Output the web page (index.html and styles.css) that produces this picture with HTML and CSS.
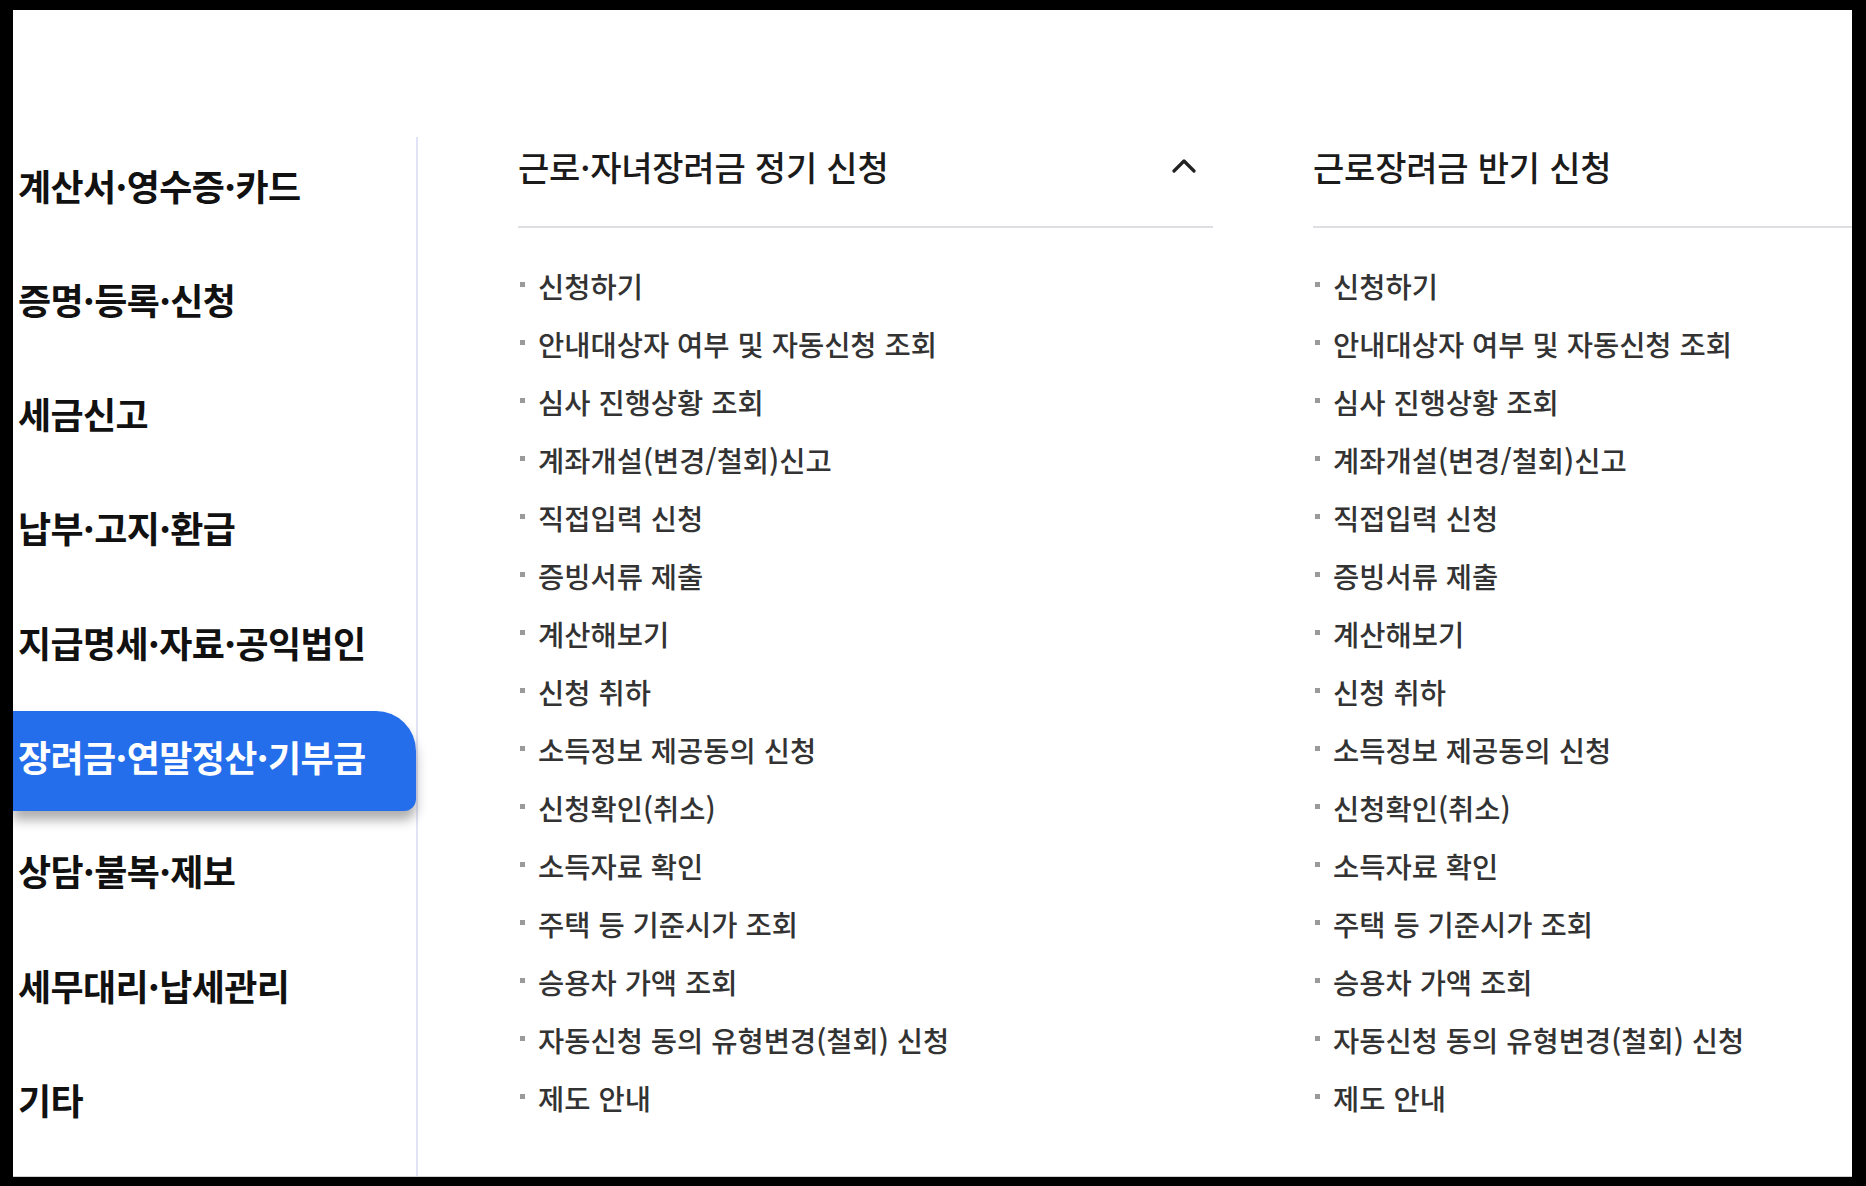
FILE: index.html
```html
<!DOCTYPE html>
<html lang="ko">
<head>
<meta charset="UTF-8" />
<meta name="viewport" content="width=device-width, initial-scale=1" />
<title>장려금·연말정산·기부금</title>
<link rel="stylesheet" href="styles.css">
</head>
<body>

<div class="frame">
  <nav class="side">
    <ul class="side-menu">
      <li class="side-item">계산서·영수증·카드</li>
      <li class="side-item">증명·등록·신청</li>
      <li class="side-item">세금신고</li>
      <li class="side-item">납부·고지·환급</li>
      <li class="side-item">지급명세·자료·공익법인</li>
      <li class="side-item is-active">장려금·연말정산·기부금</li>
      <li class="side-item">상담·불복·제보</li>
      <li class="side-item">세무대리·납세관리</li>
      <li class="side-item">기타</li>
    </ul>
  </nav>

  <main class="content">
    <section class="group">
      <div class="group-head">
        <h3 class="group-title">근로·자녀장려금 정기 신청</h3>
        <svg class="chev" width="26" height="16" viewBox="0 0 26 16">
          <polyline points="3,14 13,4 23,14" fill="none" stroke="#222" stroke-width="3.2" stroke-linecap="round" stroke-linejoin="round"/>
        </svg>
      </div>
      <ul class="links">
        <li>신청하기</li>
        <li>안내대상자 여부 및 자동신청 조회</li>
        <li>심사 진행상황 조회</li>
        <li>계좌개설(변경/철회)신고</li>
        <li>직접입력 신청</li>
        <li>증빙서류 제출</li>
        <li>계산해보기</li>
        <li>신청 취하</li>
        <li>소득정보 제공동의 신청</li>
        <li>신청확인(취소)</li>
        <li>소득자료 확인</li>
        <li>주택 등 기준시가 조회</li>
        <li>승용차 가액 조회</li>
        <li>자동신청 동의 유형변경(철회) 신청</li>
        <li>제도 안내</li>
      </ul>
    </section>

    <section class="group">
      <div class="group-head">
        <h3 class="group-title">근로장려금 반기 신청</h3>
      </div>
      <ul class="links">
        <li>신청하기</li>
        <li>안내대상자 여부 및 자동신청 조회</li>
        <li>심사 진행상황 조회</li>
        <li>계좌개설(변경/철회)신고</li>
        <li>직접입력 신청</li>
        <li>증빙서류 제출</li>
        <li>계산해보기</li>
        <li>신청 취하</li>
        <li>소득정보 제공동의 신청</li>
        <li>신청확인(취소)</li>
        <li>소득자료 확인</li>
        <li>주택 등 기준시가 조회</li>
        <li>승용차 가액 조회</li>
        <li>자동신청 동의 유형변경(철회) 신청</li>
        <li>제도 안내</li>
      </ul>
    </section>
  </main>
</div>

</body>
</html>
```

FILE: styles.css
```css
html, body {
  margin: 0;
  height: 100%;
}
body {
  background-color: #000;
  font-family: "Noto Sans CJK KR", "Noto Sans", sans-serif;
  overflow: hidden;
}
ul {
  list-style: none;
  margin: 0;
  padding: 0;
}
.frame {
  margin: 10px 14px 0 13px;
  height: 1166px;
  background-color: #fff;
  border-bottom: 1px solid #cfcfcf;
  display: flex;
  overflow: hidden;
}
.side {
  flex: 0 0 403px;
  margin-top: 127px;
  border-right: 2px solid #e3e3f8;
}
.side-menu {
  display: flex;
  flex-direction: column;
  gap: 14.3px;
  padding-top: 2.5px;
}
.side-item {
  box-sizing: border-box;
  height: 100px;
  line-height: 90px;
  padding: 0 0 10px 5px;
  font-size: 36px;
  font-weight: 700;
  color: #111;
  letter-spacing: -0.6px;
  white-space: nowrap;
}
.side-item.is-active {
  background-color: #256eeb;
  color: #fff;
  border-radius: 0 40px 12px 0;
  box-shadow: 0 9px 12px rgba(0, 0, 0, 0.32);
}
.content {
  flex: 1;
  display: flex;
  gap: 100px;
  padding: 126px 0 0 100px;
  min-width: 0;
}
.group {
  flex: 0 0 695px;
}
.group-head {
  display: flex;
  align-items: center;
  justify-content: space-between;
  height: 60px;
  padding-bottom: 30px;
  border-bottom: 2px solid #dedee3;
}
.group-title {
  margin: 0;
  font-size: 34px;
  font-weight: 500;
  color: #1b1b1b;
  letter-spacing: -0.2px;
  white-space: nowrap;
}
.chev {
  margin-right: 16px;
  margin-top: -2px;
}
.links {
  margin-top: 28.5px;
}
.links li {
  display: flex;
  align-items: center;
  height: 58px;
  font-size: 28.5px;
  font-weight: 500;
  color: #333;
  white-space: nowrap;
}
.links li::before {
  content: "";
  flex: 0 0 5px;
  height: 5px;
  margin: 0 13px 2px 2px;
  background-color: #9a9a9a;
}
```
